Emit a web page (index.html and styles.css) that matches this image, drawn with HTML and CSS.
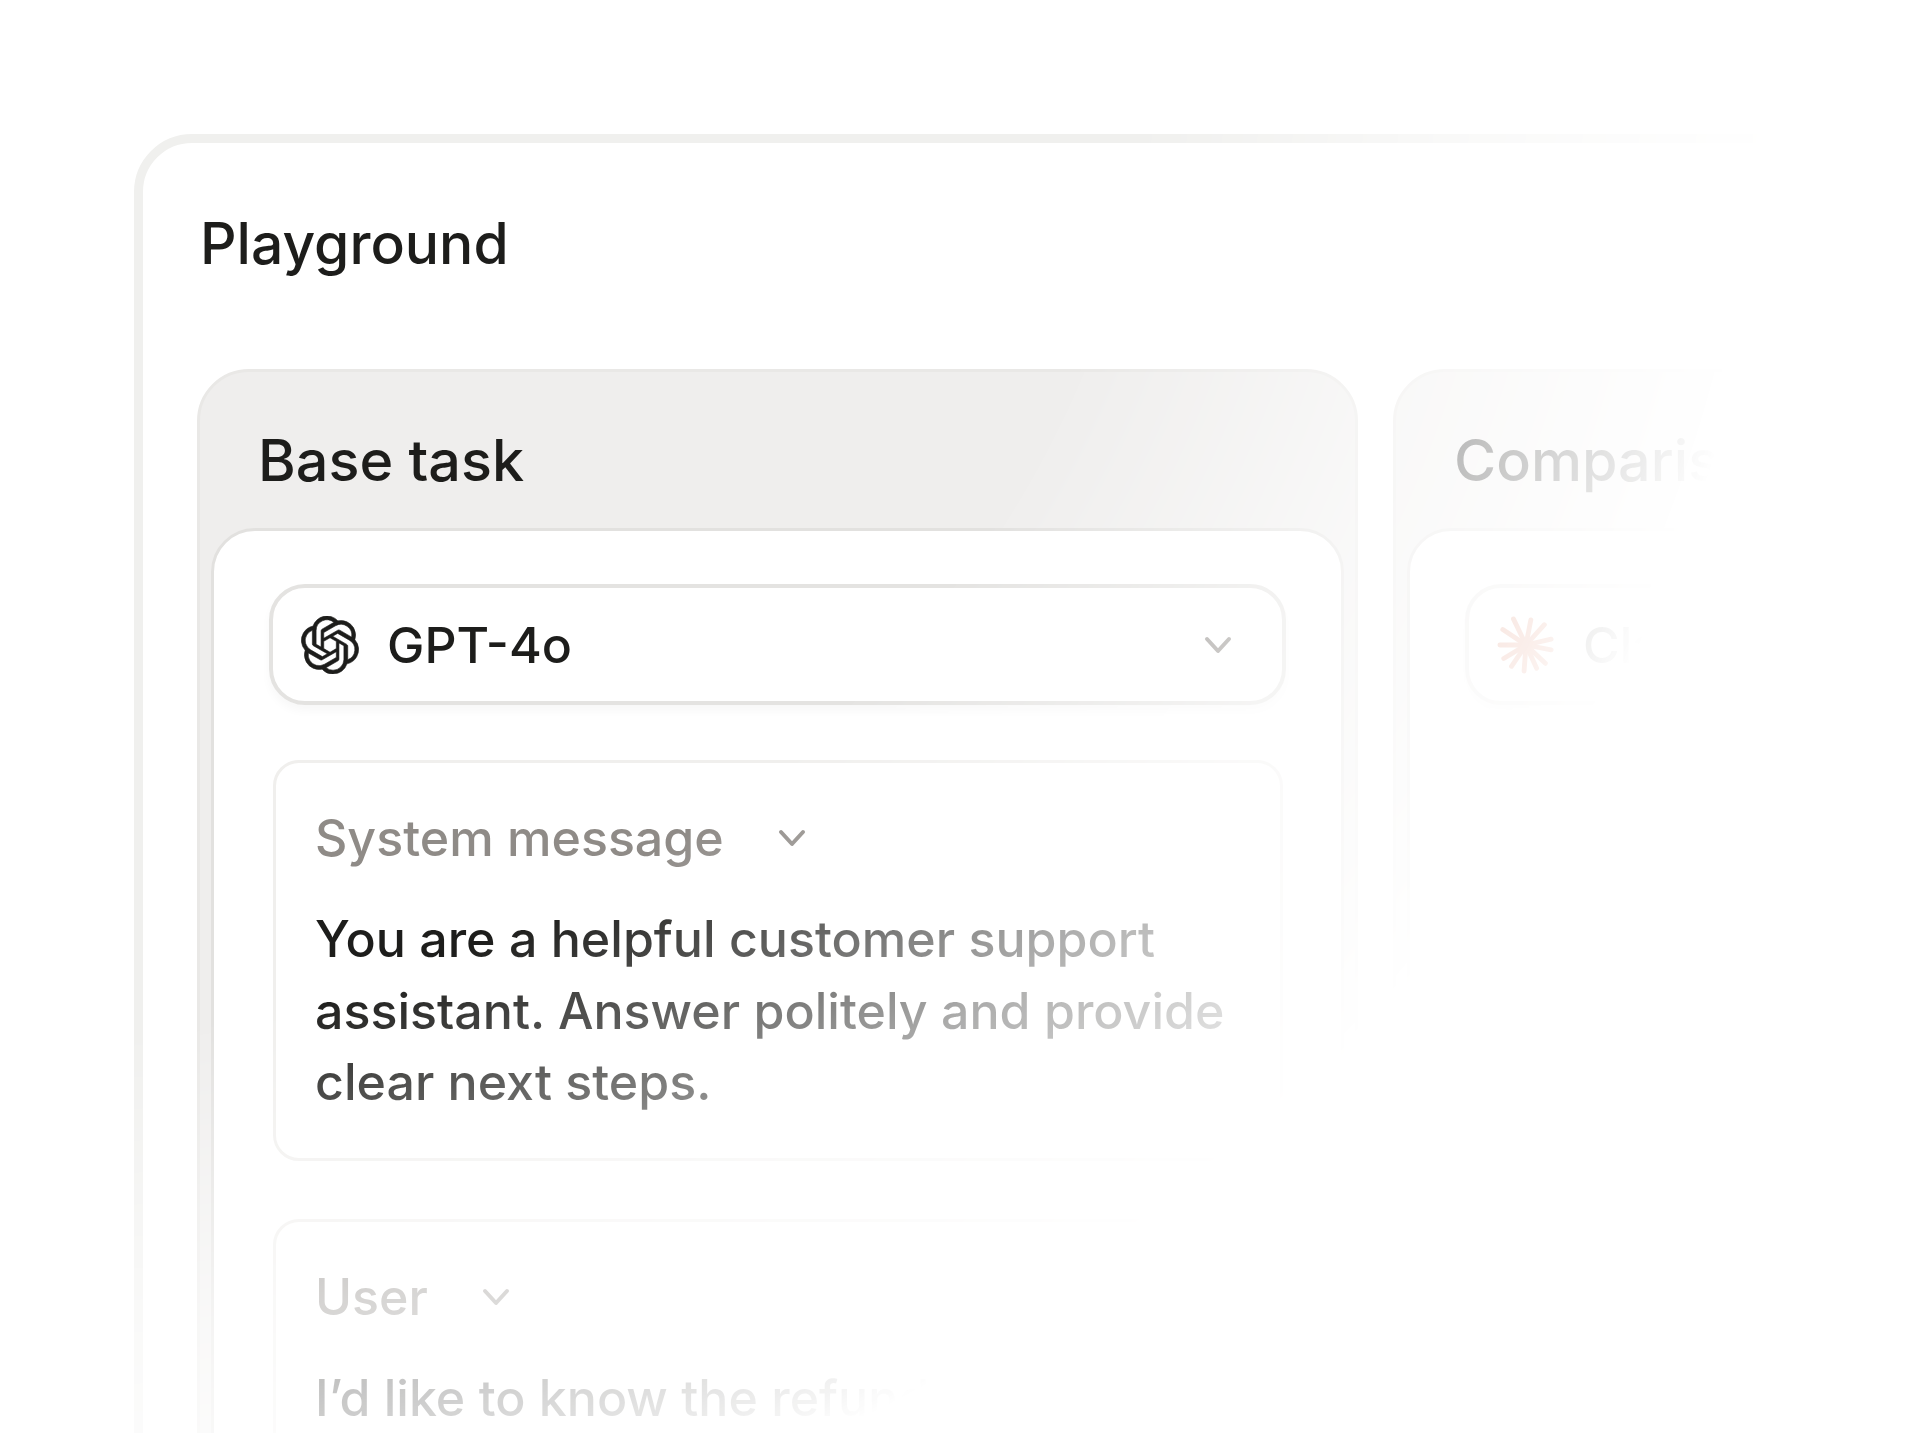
FILE: index.html
```html
<!DOCTYPE html>
<html lang="en">
<head>
    <meta charset="utf-8">
    <title>Playground</title>
    <link rel="stylesheet" href="styles.css">
</head>
<body>
<div class="stage">
    <div class="playground">
        <h1>Playground</h1>
        <div class="panels">
            <section class="panel">
                <h2>Base task</h2>
                <div class="panel-body">
                    <div class="model-select">
                        <svg class="model-icon logo" viewBox="0 0 24 24"><path d="M22.2819 9.8211a5.9847 5.9847 0 0 0-.5157-4.9108 6.0462 6.0462 0 0 0-6.5098-2.9A6.0651 6.0651 0 0 0 4.9807 4.1818a5.9847 5.9847 0 0 0-3.9977 2.9 6.0462 6.0462 0 0 0 .7427 7.0966 5.98 5.98 0 0 0 .511 4.9107 6.051 6.051 0 0 0 6.5146 2.9001A5.9847 5.9847 0 0 0 13.2599 24a6.0557 6.0557 0 0 0 5.7718-4.2058 5.9894 5.9894 0 0 0 3.9977-2.9001 6.0557 6.0557 0 0 0-.7475-7.0729zm-9.022 12.6081a4.4755 4.4755 0 0 1-2.8764-1.0408l.1419-.0804 4.7783-2.7582a.7948.7948 0 0 0 .3927-.6813v-6.7369l2.02 1.1686a.071.071 0 0 1 .038.052v5.5826a4.504 4.504 0 0 1-4.4945 4.4944zm-9.6607-4.1254a4.4708 4.4708 0 0 1-.5346-3.0137l.142.0852 4.783 2.7582a.7712.7712 0 0 0 .7806 0l5.8428-3.3685v2.3324a.0804.0804 0 0 1-.0332.0615L9.74 19.9502a4.4992 4.4992 0 0 1-6.1408-1.6464zM2.3408 7.8956a4.485 4.485 0 0 1 2.3655-1.9728V11.6a.7664.7664 0 0 0 .3879.6765l5.8144 3.3543-2.0201 1.1685a.0757.0757 0 0 1-.071 0l-4.8303-2.7865A4.504 4.504 0 0 1 2.3408 7.872zm16.5963 3.8558L13.1038 8.364 15.1192 7.2a.0757.0757 0 0 1 .071 0l4.8303 2.7913a4.4944 4.4944 0 0 1-.6765 8.1042v-5.6772a.79.79 0 0 0-.407-.667zm2.0107-3.0231l-.142-.0852-4.7735-2.7818a.7759.7759 0 0 0-.7854 0L9.409 9.2297V6.8974a.0662.0662 0 0 1 .0284-.0615l4.8303-2.7866a4.4992 4.4992 0 0 1 6.6802 4.66zM8.3065 12.863l-2.02-1.1638a.0804.0804 0 0 1-.038-.0567V6.0742a4.4992 4.4992 0 0 1 7.3757-3.4537l-.142.0805L8.704 5.459a.7948.7948 0 0 0-.3927.6813zm1.0976-2.3654l2.602-1.4998 2.6069 1.4998v2.9994l-2.5974 1.4997-2.6067-1.4997Z"/></svg>
                        <span class="model-name">GPT-4o</span>
                        <svg class="chevron chevron-end" viewBox="0 0 28 20"><path d="M3 4l11 12L25 4"/></svg>
                    </div>
                    <div class="message">
                        <div class="message-role">
                            <span>System message</span>
                            <svg class="chevron" viewBox="0 0 28 20"><path d="M3 4l11 12L25 4"/></svg>
                        </div>
                        <p>You are a helpful customer support assistant. Answer politely and provide clear next steps.</p>
                    </div>
                    <div class="message">
                        <div class="message-role">
                            <span>User</span>
                            <svg class="chevron" viewBox="0 0 28 20"><path d="M3 4l11 12L25 4"/></svg>
                        </div>
                        <p>I’d like to know the refund policy</p>
                    </div>
                </div>
            </section>
            <section class="panel">
                <h2>Comparison</h2>
                <div class="panel-body">
                    <div class="model-select">
                        <svg class="model-icon" viewBox="0 0 60 60">
                            <g class="spark">
                                <path d="M30 30L17 3"/><path d="M30 30L35 4"/><path d="M30 30L49 9"/>
                                <path d="M30 30L56 24"/><path d="M30 30L56 35"/><path d="M30 30L50 49"/>
                                <path d="M30 30L41 54"/><path d="M30 30L28 57"/><path d="M30 30L15 52"/>
                                <path d="M30 30L7 44"/><path d="M30 30L3 30"/><path d="M30 30L6 14"/>
                            </g>
                        </svg>
                        <span class="model-name">Claude</span>
                    </div>
                </div>
            </section>
        </div>
    </div>
</div>
</body>
</html>
```
FILE: styles.css
```css
* {
    box-sizing: border-box;
}
body {
    margin: 0;
    background-color: #fff;
    font-family: 'Inter', sans-serif;
    font-weight: 450;
    color: #1d1d1b;
}
.stage {
    height: 100vh;
    overflow: hidden;
    padding: 134px 0 0 134px;
    -webkit-mask-image: radial-gradient(ellipse 1788px 1620px at 0 0, #000 64%, rgba(0, 0, 0, 0.37) 82.5%, transparent 100%);
    mask-image: radial-gradient(ellipse 1788px 1620px at 0 0, #000 64%, rgba(0, 0, 0, 0.37) 82.5%, transparent 100%);
}
.playground {
    width: 2400px;
    height: 1600px;
    padding: 69px 0 0 54px;
    background-color: #fff;
    border: 9px solid #f0f0ee;
    border-radius: 58px 0 0 0;
}
h1 {
    margin: 0 0 93px 3px;
    font-size: 57px;
    line-height: 64px;
    font-weight: 450;
}
.panels {
    display: flex;
    gap: 35px;
}
.panel {
    flex: none;
    width: 1161px;
    height: 1400px;
    padding: 0 11px;
    background-color: #efeeed;
    border: 3px solid #e9e8e6;
    border-radius: 52px 52px 0 0;
}
.panel h2 {
    margin: 56px 0 36px 47px;
    font-size: 57.5px;
    line-height: 64px;
    font-weight: 450;
}
.panel-body {
    height: 1200px;
    padding: 53px 55px 0 55px;
    background-color: #fff;
    border: 3px solid #e2e1df;
    border-radius: 44px 44px 0 0;
}
.model-select {
    display: flex;
    align-items: center;
    height: 121px;
    padding: 0 50px 0 28px;
    margin-bottom: 55px;
    border: 4px solid #e4e3e1;
    border-radius: 36px;
    box-shadow: 0 6px 10px rgba(0, 0, 0, 0.03);
}
.model-icon {
    width: 58px;
    height: 58px;
    margin-right: 28px;
    flex: none;
}
.logo path {
    fill: #1d1d1b;
    stroke: #1d1d1b;
    stroke-width: 0.25;
}
.model-name {
    font-size: 50px;
}
.chevron {
    width: 28px;
    height: 20px;
    flex: none;
    fill: none;
    stroke: #8f8b87;
    stroke-width: 4;
    stroke-linecap: round;
    stroke-linejoin: round;
}
.chevron-end {
    margin-left: auto;
}
.spark path {
    stroke: #d97757;
    stroke-width: 5;
    stroke-linecap: round;
}
.message {
    margin: 0 3px 58px 4px;
    padding: 46px 40px 40px 39px;
    border: 3px solid #f0efed;
    border-radius: 26px;
}
.message-role {
    display: flex;
    align-items: center;
    gap: 54px;
    margin-bottom: 36px;
    font-size: 50.1px;
    line-height: 58px;
    color: #8f8b87;
}
.message p {
    margin: 0;
    font-size: 50.1px;
    line-height: 71.5px;
}
```
